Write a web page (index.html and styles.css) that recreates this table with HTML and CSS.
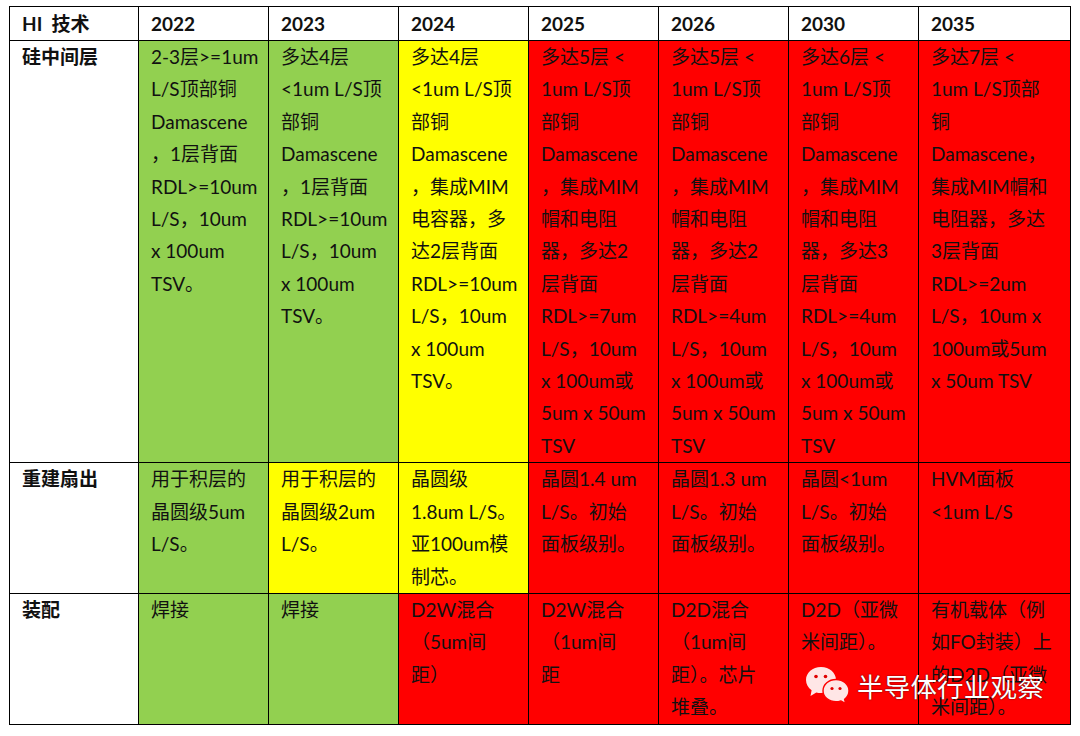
FILE: index.html
```html
<!DOCTYPE html>
<html lang="zh-CN">
<head>
<meta charset="utf-8">
<title>HI 技术路线图</title>
<link rel="stylesheet" href="styles.css">
</head>
<body>
<div class="page">
  <table class="roadmap">
    <colgroup>
      <col class="c-label">
      <col class="c-year"><col class="c-year"><col class="c-year"><col class="c-year"><col class="c-year"><col class="c-year">
      <col class="c-last">
    </colgroup>
    <thead>
      <tr class="r-head">
        <th class="label">HI&nbsp; 技术</th>
        <th>2022</th><th>2023</th><th>2024</th><th>2025</th><th>2026</th><th>2030</th><th>2035</th>
      </tr>
    </thead>
    <tbody>
      <tr class="r-1">
        <th class="label">硅中间层</th>
        <td class="g">2-3层&gt;=1um<br>L/S顶部铜<br>Damascene<br>，1层背面<br>RDL&gt;=10um<br>L/S，10um<br>x 100um<br>TSV。</td>
        <td class="g">多达4层<br>&lt;1um L/S顶<br>部铜<br>Damascene<br>，1层背面<br>RDL&gt;=10um<br>L/S，10um<br>x 100um<br>TSV。</td>
        <td class="y">多达4层<br>&lt;1um L/S顶<br>部铜<br>Damascene<br>，集成MIM<br>电容器，多<br>达2层背面<br>RDL&gt;=10um<br>L/S，10um<br>x 100um<br>TSV。</td>
        <td class="r">多达5层 &lt;<br>1um L/S顶<br>部铜<br>Damascene<br>，集成MIM<br>帽和电阻<br>器，多达2<br>层背面<br>RDL&gt;=7um<br>L/S，10um<br>x 100um或<br>5um x 50um<br>TSV</td>
        <td class="r">多达5层 &lt;<br>1um L/S顶<br>部铜<br>Damascene<br>，集成MIM<br>帽和电阻<br>器，多达2<br>层背面<br>RDL&gt;=4um<br>L/S，10um<br>x 100um或<br>5um x 50um<br>TSV</td>
        <td class="r">多达6层 &lt;<br>1um L/S顶<br>部铜<br>Damascene<br>，集成MIM<br>帽和电阻<br>器，多达3<br>层背面<br>RDL&gt;=4um<br>L/S，10um<br>x 100um或<br>5um x 50um<br>TSV</td>
        <td class="r">多达7层 &lt;<br>1um L/S顶部<br>铜<br>Damascene，<br>集成MIM帽和<br>电阻器，多达<br>3层背面<br>RDL&gt;=2um<br>L/S，10um x<br>100um或5um<br>x 50um TSV</td>
      </tr>
      <tr class="r-2">
        <th class="label">重建扇出</th>
        <td class="g">用于积层的<br>晶圆级5um<br>L/S。</td>
        <td class="y">用于积层的<br>晶圆级2um<br>L/S。</td>
        <td class="y">晶圆级<br>1.8um L/S。<br>亚100um模<br>制芯。</td>
        <td class="r">晶圆1.4 um<br>L/S。初始<br>面板级别。</td>
        <td class="r">晶圆1.3 um<br>L/S。初始<br>面板级别。</td>
        <td class="r">晶圆&lt;1um<br>L/S。初始<br>面板级别。</td>
        <td class="r">HVM面板<br>&lt;1um L/S</td>
      </tr>
      <tr class="r-3">
        <th class="label">装配</th>
        <td class="g">焊接</td>
        <td class="g">焊接</td>
        <td class="r">D2W混合<br>（5um间<br>距）</td>
        <td class="r">D2W混合<br>（1um间<br>距</td>
        <td class="r">D2D混合<br>（1um间<br>距）。芯片<br>堆叠。</td>
        <td class="r">D2D（亚微<br>米间距）。</td>
        <td class="r">有机载体（例<br>如FO封装）上<br>的D2D（亚微<br>米间距）。</td>
      </tr>
    </tbody>
  </table>

  <div class="watermark">
    <svg class="wm-icon" viewBox="0 0 44 38" width="44" height="38" aria-hidden="true">
      <path d="M15 1 C23.5 1 30 6.8 30 14 C30 21.2 23.5 27 15 27 C13.3 27 11.8 26.8 10.3 26.4 L4.5 30 L5.6 24.2 C2.2 21.8 0 18.1 0 14 C0 6.8 6.5 1 15 1 Z" fill="#ffe6e6"/>
      <circle cx="10" cy="10.5" r="1.8" fill="#e00000"/>
      <circle cx="19.5" cy="10.5" r="1.8" fill="#e00000"/>
      <path d="M30 13.5 C37.2 13.5 43 18.5 43 24.8 C43 28.2 41.3 31.2 38.6 33.2 L39.6 37.5 L35 34.9 C33.4 35.4 31.8 35.8 30 35.8 C22.8 35.8 17 30.9 17 24.8 C17 18.5 22.8 13.5 30 13.5 Z" fill="#ffe6e6" stroke="#ff0000" stroke-width="1.4"/>
      <circle cx="26" cy="22.5" r="1.6" fill="#e00000"/>
      <circle cx="34" cy="22.5" r="1.6" fill="#e00000"/>
    </svg>
    <span class="wm-text">半导体行业观察</span>
  </div>
</div>
</body>
</html>
```

FILE: styles.css
```css
html, body {
  margin: 0;
  padding: 0;
  background: #ffffff;
}

.page {
  position: relative;
  width: 1080px;
  height: 736px;
  padding: 6px 0 0 9px;
  box-sizing: border-box;
  font-family: Lato, "Noto Sans CJK SC", sans-serif;
  color: #111111;
}

.roadmap {
  border-collapse: collapse;
  table-layout: fixed;
  width: 1061px;
  font-size: 19px;
  line-height: 32.4px;
}

.c-label { width: 129px; }
.c-year { width: 130px; }
.c-last { width: 152px; }

.roadmap th,
.roadmap td {
  border: 1px solid #000000;
  padding: 0 6px 0 12px;
  vertical-align: top;
  text-align: left;
  white-space: nowrap;
  overflow: hidden;
}

.roadmap td {
  font-weight: 400;
}

.roadmap th {
  font-weight: 700;
  background: #ffffff;
}

.r-head th {
  vertical-align: middle;
  line-height: 24px;
  font-size: 19px;
}

.r-head { height: 34px; }
.r-1 { height: 422px; }
.r-2 { height: 130px; }
.r-3 { height: 129px; }

.g { background: #92d050; }
.y { background: #ffff00; }
.r { background: #ff0000; }

.watermark {
  position: absolute;
  left: 806px;
  top: 666px;
  display: flex;
  align-items: center;
  gap: 7px;
}

.wm-icon {
  display: block;
}

.wm-text {
  font-family: "Noto Sans CJK SC", sans-serif;
  font-size: 26.5px;
  line-height: 32px;
  color: #ffffff;
  letter-spacing: 0.2px;
  text-shadow: 0 0 1px rgba(60, 0, 0, 0.9), 0 0 2px rgba(60, 0, 0, 0.5);
  margin-top: 2px;
}
```
